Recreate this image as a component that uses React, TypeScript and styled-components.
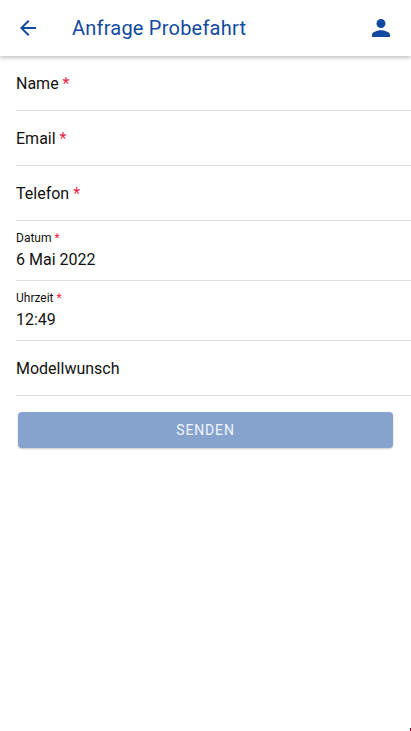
import React from "react";
import styled, { createGlobalStyle } from "styled-components";

const Global = createGlobalStyle`
  * { box-sizing: border-box; }
  html, body { margin: 0; background: #fff; overflow: hidden; }
  body { font-family: Roboto, sans-serif; color: #111; }
`;
const Page = styled.div`
  position: relative;
  height: 731px;
  overflow: hidden;
  background: #fff;
`;
const Header = styled.header`
  display: flex;
  align-items: center;
  height: 56px;
  padding: 0 16px;
  color: #114a9f;
  box-shadow: 0 2px 4px rgba(0,0,0,.24);
`;
const IconButton = styled.button`
  display: flex;
  padding: 0;
  border: 0;
  background: none;
  color: inherit;
`;
const Title = styled.h1`
  flex: 1;
  margin: 0 0 0 32px;
  font-size: 20px;
  line-height: 24px;
  font-weight: 400;
  letter-spacing: 0.22px;
`;
const Form = styled.form`
  display: flex;
  flex-direction: column;
`;
const Field = styled.div<{ $filled: boolean }>`
  height: ${(p) => (p.$filled ? 60 : 55)}px;
  margin-left: 16px;
  padding-top: ${(p) => (p.$filled ? 9 : 16)}px;
  border-bottom: 1px solid #dedede;
`;
const Label = styled.label<{ $small: boolean }>`
  display: block;
  font-size: ${(p) => (p.$small ? 12 : 16)}px;
  line-height: ${(p) => (p.$small ? 16 : 24)}px;
`;
const Star = styled.span`
  color: #f01c44;
`;
const Value = styled.div`
  margin-top: 2px;
  font-size: 16px;
  line-height: 24px;
`;
const Submit = styled.button`
  height: 36px;
  margin: 16px 18px 0;
  padding: 0;
  border: 0;
  border-radius: 4px;
  background: #86a3ce;
  color: #f0f6ff;
  font: 400 14px Roboto, sans-serif;
  letter-spacing: 0.84px;
  box-shadow: 0 1px 2px rgba(0,0,0,.22);
`;
const Marker = styled.span`
  position: absolute;
  right: 0;
  bottom: 0;
  width: 1px;
  height: 3px;
  background: linear-gradient(#101030 33%, #a01020 33%);
`;
const fields = [
  { label: "Name", required: true },
  { label: "Email", required: true },
  { label: "Telefon", required: true },
  { label: "Datum", required: true, value: "6 Mai 2022" },
  { label: "Uhrzeit", required: true, value: "12:49" },
  { label: "Modellwunsch", required: false },
];

export default function App() {
  return (
    <Page>
      <Global />
      <Header>
        <IconButton aria-label="Zurück">
          <svg width="24" height="24" viewBox="0 0 24 24" fill="currentColor"><path d="M20 11H7.83l5.59-5.59L12 4l-8 8 8 8 1.41-1.41L7.83 13H20v-2z" /></svg>
        </IconButton>
        <Title>Anfrage Probefahrt</Title>
        <IconButton aria-label="Profil">
          <svg width="28" height="28" viewBox="-0.44 -0.44 24.88 24.88" fill="currentColor"><path d="M12 12c2.21 0 4-1.79 4-4s-1.79-4-4-4-4 1.79-4 4 1.79 4 4 4zm0 2c-2.67 0-8 1.34-8 4v2h16v-2c0-2.66-5.33-4-8-4z" /></svg>
        </IconButton>
      </Header>
      <Form>
        {fields.map((f) => (
          <Field key={f.label} $filled={!!f.value}>
            <Label $small={!!f.value}>{f.label}{f.required && <Star> *</Star>}</Label>
            {f.value && <Value>{f.value}</Value>}
          </Field>
        ))}
        <Submit type="button">SENDEN</Submit>
      </Form>
      <Marker />
    </Page>
  );
}
